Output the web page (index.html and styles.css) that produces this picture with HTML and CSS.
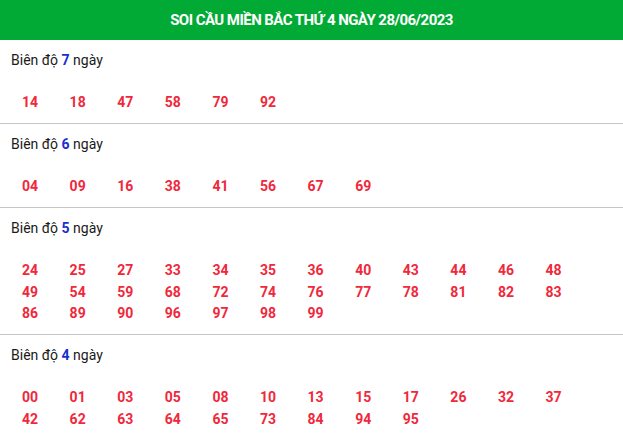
FILE: index.html
```html
<!DOCTYPE html>
<html lang="vi">
<head>
<meta charset="utf-8">
<title>Soi cầu miền Bắc</title>
<link rel="stylesheet" href="styles.css">
</head>
<body>
<div class="box">
  <h2 class="title">SOI CẦU MIỀN BẮC THỨ 4 NGÀY 28/06/2023</h2>
  <div class="section">
    <div class="label">Biên độ <b>7</b> ngày</div>
    <div class="nums">
      <span>14</span><span>18</span><span>47</span><span>58</span><span>79</span><span>92</span>
    </div>
  </div>
  <div class="section">
    <div class="label">Biên độ <b>6</b> ngày</div>
    <div class="nums">
      <span>04</span><span>09</span><span>16</span><span>38</span><span>41</span><span>56</span><span>67</span><span>69</span>
    </div>
  </div>
  <div class="section">
    <div class="label">Biên độ <b>5</b> ngày</div>
    <div class="nums">
      <span>24</span><span>25</span><span>27</span><span>33</span><span>34</span><span>35</span><span>36</span><span>40</span><span>43</span><span>44</span><span>46</span><span>48</span>
      <span>49</span><span>54</span><span>59</span><span>68</span><span>72</span><span>74</span><span>76</span><span>77</span><span>78</span><span>81</span><span>82</span><span>83</span>
      <span>86</span><span>89</span><span>90</span><span>96</span><span>97</span><span>98</span><span>99</span>
    </div>
  </div>
  <div class="section">
    <div class="label">Biên độ <b>4</b> ngày</div>
    <div class="nums">
      <span>00</span><span>01</span><span>03</span><span>05</span><span>08</span><span>10</span><span>13</span><span>15</span><span>17</span><span>26</span><span>32</span><span>37</span>
      <span>42</span><span>62</span><span>63</span><span>64</span><span>65</span><span>73</span><span>84</span><span>94</span><span>95</span>
    </div>
  </div>
</div>
</body>
</html>
```
FILE: styles.css
```css
html, body {
  margin: 0;
  padding: 0;
  background: #ffffff;
}
body {
  font-family: Roboto, "Noto Sans", Arial, sans-serif;
  color: #222222;
}
.box {
  width: 623px;
}
.title {
  margin: 0;
  height: 40px;
  line-height: 40px;
  background: #01aa35;
  color: #ffffff;
  font-size: 15px;
  font-weight: 700;
  text-align: center;
  letter-spacing: -0.55px;
}
.section {
  padding: 10px 12px 9.5px 11px;
  border-bottom: 1px solid #c6c6c6;
}
.label {
  font-size: 14px;
  line-height: 20px;
  color: #1a1a1a;
}
.label b {
  color: #1a2fd0;
  font-weight: 700;
}
.nums {
  margin-top: 22px;
  padding-left: 11px;
  display: grid;
  grid-template-columns: repeat(12, 47.6px);
}
.nums span {
  font-size: 14px;
  font-weight: 700;
  line-height: 21.5px;
  color: #f0283b;
}
```
